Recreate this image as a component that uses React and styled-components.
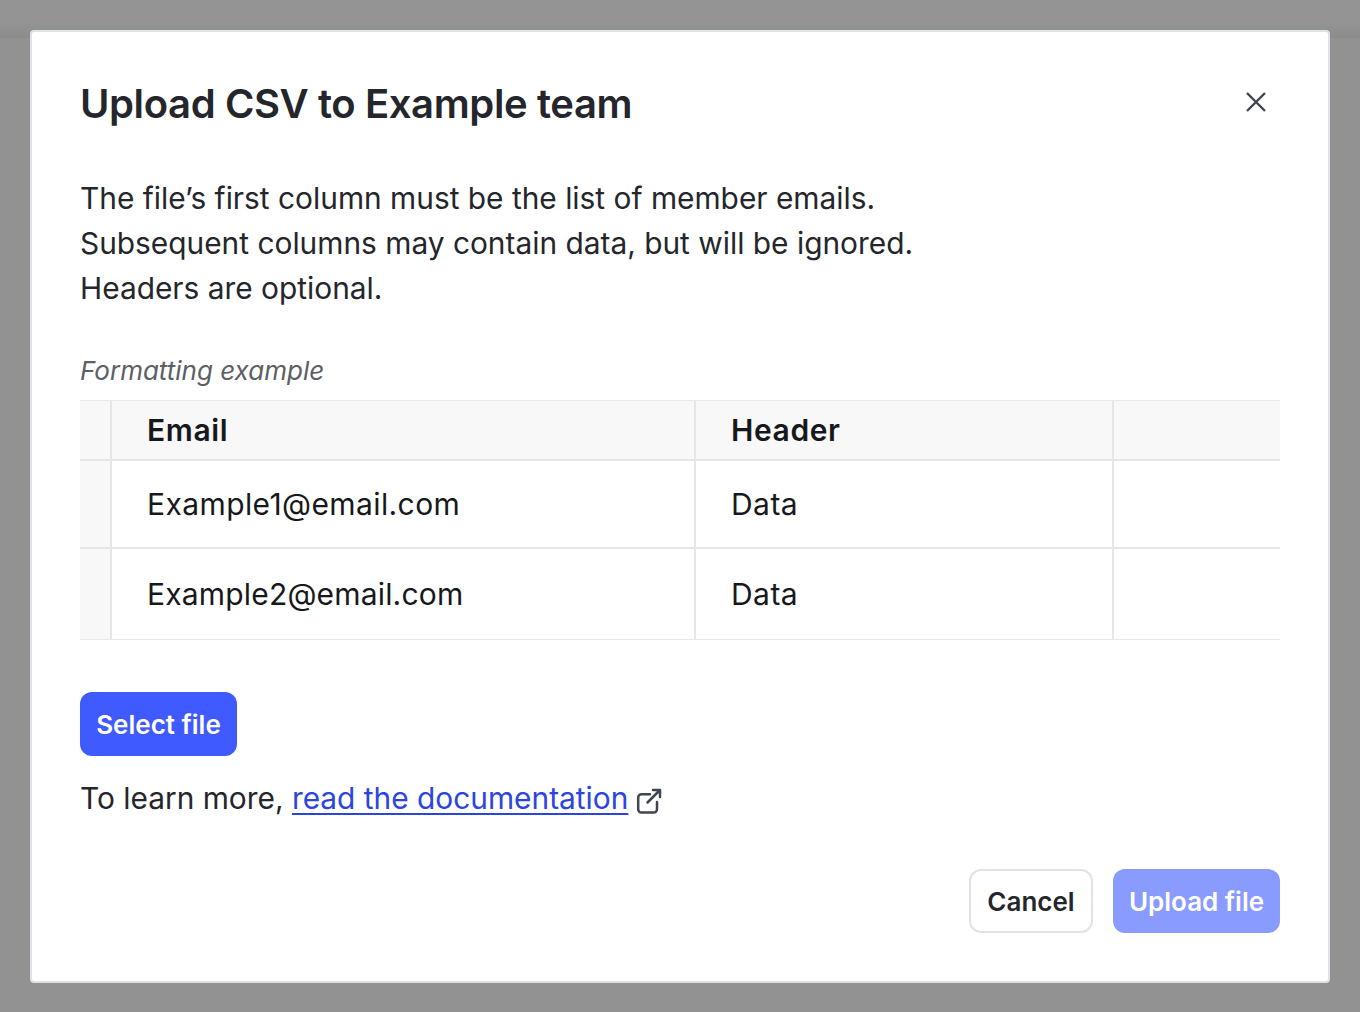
import React from "react"
import styled, { createGlobalStyle } from "styled-components"

const GlobalStyle = createGlobalStyle`
  html, body {
    margin: 0;
    padding: 0;
    height: 100%;
    background: #929292;
    font-family: "Inter", "Liberation Sans", sans-serif;
    color: #24262b;
  }
`

const Backdrop = styled.div`
  box-sizing: border-box;
  height: 1012px;
  padding: 30px 30px 29px;
  overflow: hidden;
  background: linear-gradient(to bottom, #949494 0, #949494 22px, #8d8d8d 35px, #8d8d8d 38px, #929292 39px);
`

const Modal = styled.div`
  box-sizing: border-box;
  height: 953px;
  padding: 48px 48px 0;
  background: #fff;
  border: 2px solid #dfe3e8;
  border-radius: 4px;
`

const Header = styled.div`
  display: flex;
  justify-content: space-between;
  align-items: flex-start;
  height: 96px;
`

const Title = styled.h1`
  margin: 0;
  font-size: 40px;
  line-height: 48px;
  font-weight: 600;
  letter-spacing: -0.39px;
`

const CloseButton = styled.button`
  display: flex;
  padding: 0;
  margin: 11px 13px 0 0;
  border: 0;
  background: none;
  color: #3f4650;
`

const Intro = styled.p`
  margin: 0;
  font-size: 29.86px;
  line-height: 45px;
`

const Caption = styled.div`
  margin-top: 42px;
  font-size: 26px;
  line-height: 36px;
  font-style: italic;
  color: #5c6066;
`

const Table = styled.div`
  display: grid;
  grid-template-columns: 32px 584px 418px 166px;
  margin-top: 11px;
  border-top: 1px solid #e8e8e8;
  border-bottom: 1px solid #e8e8e8;
`

const Cell = styled.div`
  box-sizing: border-box;
  display: flex;
  align-items: center;
  height: ${(p) => p.$height}px;
  padding-left: ${(p) => (p.$gutter ? 0 : 35)}px;
  font-size: 30px;
  font-weight: ${(p) => (p.$head ? 600 : 400)};
  letter-spacing: ${(p) => p.$tracking ?? 0.45}px;
  color: #17181b;
  background: ${(p) => (p.$head || p.$gutter ? "#f8f8f8" : "#fff")};
  border-right: ${(p) => (p.$last ? "0" : "2px solid #e6e6e6")};
  border-bottom: ${(p) => (p.$bottom ? "0" : "2px solid #e6e6e6")};
`

const SelectButton = styled.button`
  display: block;
  height: 64px;
  width: 157px;
  margin-top: 52px;
  padding: 0;
  border: 0;
  border-radius: 12px;
  background: #3f5bff;
  color: #fff;
  font: 600 26px "Inter", sans-serif;
`

const LearnMore = styled.div`
  display: flex;
  align-items: center;
  margin-top: 20px;
  font-size: 29.86px;
  line-height: 45px;
  white-space: pre;
`

const DocLink = styled.a`
  color: #2b45e0;
  text-decoration: underline;
  text-decoration-thickness: 2px;
  text-underline-offset: 4px;
`

const ExternalIcon = styled.svg`
  margin: 5px 0 0 8px;
  color: #3f4650;
`

const Footer = styled.div`
  display: flex;
  justify-content: flex-end;
  gap: 20px;
  margin-top: 48px;
`

const FooterButton = styled.button`
  box-sizing: border-box;
  height: 64px;
  width: ${(p) => (p.$primary ? 167 : 124)}px;
  padding: 0;
  border: ${(p) => (p.$primary ? "0" : "2px solid #dfe3e8")};
  border-radius: 12px;
  background: ${(p) => (p.$primary ? "#8a9bff" : "#fff")};
  color: ${(p) => (p.$primary ? "#fff" : "#24262b")};
  font: 600 26px "Inter", sans-serif;
`

const rows = [
  { email: "Email", data: "Header", head: true, height: 60, tracking: 0.6 },
  { email: "Example1@email.com", data: "Data", height: 88, tracking: 0.4 },
  { email: "Example2@email.com", data: "Data", height: 90, tracking: 0.18, bottom: true },
]

export default function App() {
  return (
    <>
      <GlobalStyle />
      <Backdrop>
        <Modal>
          <Header>
            <Title>Upload CSV to Example team</Title>
            <CloseButton aria-label="Close">
              <svg width="22" height="22" viewBox="0 0 22 22" fill="none" stroke="currentColor" strokeWidth="2.4">
                <path d="M2 2 20 20M20 2 2 20" />
              </svg>
            </CloseButton>
          </Header>
          <Intro>
            The file’s first column must be the list of member emails.
            <br />
            Subsequent columns may contain data, but will be ignored.
            <br />
            Headers are optional.
          </Intro>
          <Caption>Formatting example</Caption>
          <Table>
            {rows.map((row) => (
              <React.Fragment key={row.email}>
                <Cell $gutter $height={row.height} $bottom={row.bottom} />
                <Cell $head={row.head} $tracking={row.tracking} $height={row.height} $bottom={row.bottom}>{row.email}</Cell>
                <Cell $head={row.head} $tracking={row.head ? row.tracking : undefined} $height={row.height} $bottom={row.bottom}>{row.data}</Cell>
                <Cell $head={row.head} $last $height={row.height} $bottom={row.bottom} />
              </React.Fragment>
            ))}
          </Table>
          <SelectButton>Select file</SelectButton>
          <LearnMore>
            To learn more, <DocLink href="#docs">read the documentation</DocLink>
            <ExternalIcon width="26" height="26" viewBox="0 0 26 26" fill="none" stroke="currentColor" strokeWidth="2.5" strokeLinecap="round" strokeLinejoin="round">
              <path d="M14 6.2H5.5a3.3 3.3 0 0 0-3.3 3.3v11.7a3.3 3.3 0 0 0 3.3 3.3h12.2a3.3 3.3 0 0 0 3.3-3.3V14" />
              <path d="M11.5 14.5 24 2M17 2h7v7" />
            </ExternalIcon>
          </LearnMore>
          <Footer>
            <FooterButton>Cancel</FooterButton>
            <FooterButton $primary>Upload file</FooterButton>
          </Footer>
        </Modal>
      </Backdrop>
    </>
  )
}
